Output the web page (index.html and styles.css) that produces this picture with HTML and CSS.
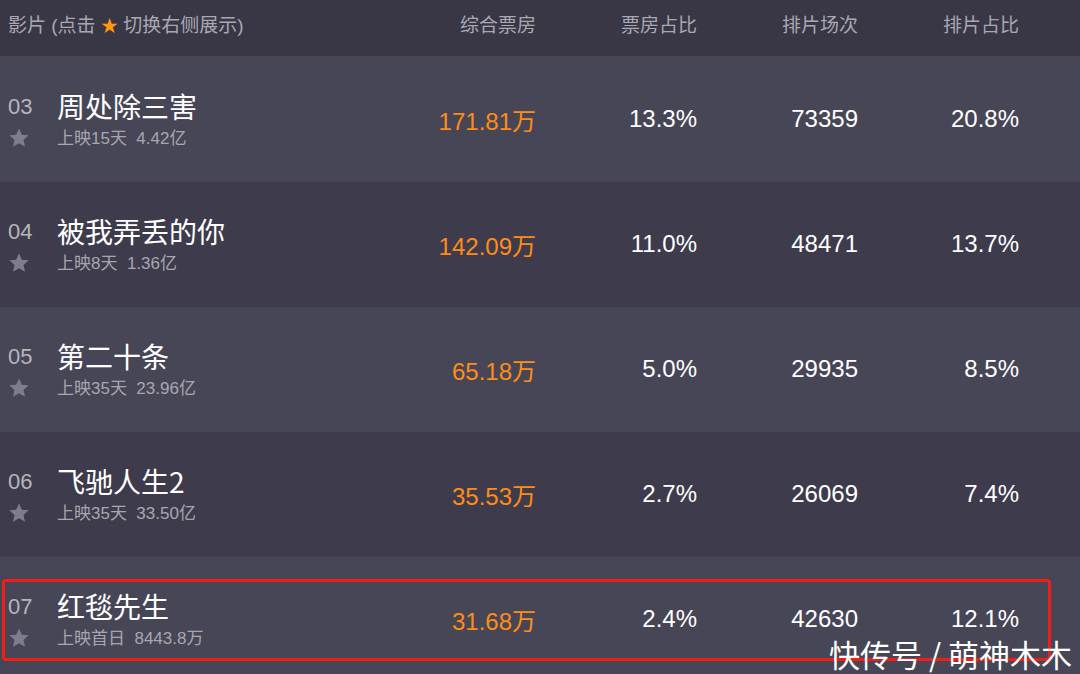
FILE: index.html
```html
<!DOCTYPE html>
<html lang="zh-CN">
<head>
<meta charset="utf-8">
<link rel="stylesheet" href="styles.css">
</head>
<body>
<div class="board">
  <div class="head">
    <div class="head-title">影片 (点击 <span class="hstar">★</span> 切换右侧展示)</div>
    <div class="head-col">综合票房</div>
    <div class="head-col">票房占比</div>
    <div class="head-col">排片场次</div>
    <div class="head-col">排片占比</div>
  </div>

  <div class="row light">
    <div class="film">
      <div class="idx"><div class="num">03</div><svg class="star" viewBox="0 0 24 24"><path d="M12 1.5l3.1 7 7.4.6-5.6 5 1.7 7.4L12 17.6l-6.6 3.9 1.7-7.4-5.6-5 7.4-.6z"/></svg></div>
      <div class="info"><div class="name">周处除三害</div><div class="sub">上映15天&nbsp;&nbsp;4.42亿</div></div>
    </div>
    <div class="val orange">171.81万</div>
    <div class="val">13.3%</div>
    <div class="val">73359</div>
    <div class="val">20.8%</div>
  </div>

  <div class="row dark">
    <div class="film">
      <div class="idx"><div class="num">04</div><svg class="star" viewBox="0 0 24 24"><path d="M12 1.5l3.1 7 7.4.6-5.6 5 1.7 7.4L12 17.6l-6.6 3.9 1.7-7.4-5.6-5 7.4-.6z"/></svg></div>
      <div class="info"><div class="name">被我弄丢的你</div><div class="sub">上映8天&nbsp;&nbsp;1.36亿</div></div>
    </div>
    <div class="val orange">142.09万</div>
    <div class="val">11.0%</div>
    <div class="val">48471</div>
    <div class="val">13.7%</div>
  </div>

  <div class="row light">
    <div class="film">
      <div class="idx"><div class="num">05</div><svg class="star" viewBox="0 0 24 24"><path d="M12 1.5l3.1 7 7.4.6-5.6 5 1.7 7.4L12 17.6l-6.6 3.9 1.7-7.4-5.6-5 7.4-.6z"/></svg></div>
      <div class="info"><div class="name">第二十条</div><div class="sub">上映35天&nbsp;&nbsp;23.96亿</div></div>
    </div>
    <div class="val orange">65.18万</div>
    <div class="val">5.0%</div>
    <div class="val">29935</div>
    <div class="val">8.5%</div>
  </div>

  <div class="row dark">
    <div class="film">
      <div class="idx"><div class="num">06</div><svg class="star" viewBox="0 0 24 24"><path d="M12 1.5l3.1 7 7.4.6-5.6 5 1.7 7.4L12 17.6l-6.6 3.9 1.7-7.4-5.6-5 7.4-.6z"/></svg></div>
      <div class="info"><div class="name">飞驰人生2</div><div class="sub">上映35天&nbsp;&nbsp;33.50亿</div></div>
    </div>
    <div class="val orange">35.53万</div>
    <div class="val">2.7%</div>
    <div class="val">26069</div>
    <div class="val">7.4%</div>
  </div>

  <div class="row light">
    <div class="film">
      <div class="idx"><div class="num">07</div><svg class="star" viewBox="0 0 24 24"><path d="M12 1.5l3.1 7 7.4.6-5.6 5 1.7 7.4L12 17.6l-6.6 3.9 1.7-7.4-5.6-5 7.4-.6z"/></svg></div>
      <div class="info"><div class="name">红毯先生</div><div class="sub">上映首日&nbsp;&nbsp;8443.8万</div></div>
    </div>
    <div class="val orange">31.68万</div>
    <div class="val">2.4%</div>
    <div class="val">42630</div>
    <div class="val">12.1%</div>
  </div>

  <div class="highlight"></div>
  <div class="watermark">快传号 / 萌神木木</div>
</div>
</body>
</html>
```

FILE: styles.css
```css
html, body {
  margin: 0;
  padding: 0;
  background: #474657;
}
body {
  width: 1080px;
  height: 674px;
  overflow: hidden;
  font-family: "Liberation Sans", "Noto Sans CJK SC", sans-serif;
}
.board {
  position: relative;
  width: 1080px;
  height: 674px;
  overflow: hidden;
}
.head {
  display: grid;
  grid-template-columns: 1fr 161px 161px 161px 161px;
  padding-right: 61px;
  height: 56px;
  align-items: center;
  background: #393745;
  color: #a9a8b2;
  font-size: 19px;
}
.head-title {
  padding-left: 8px;
  padding-bottom: 10px;
}
.hstar {
  color: #ff9a0e;
  font-size: 17px;
}
.head-col {
  text-align: right;
  font-size: 19px;
  padding-bottom: 10px;
}
.row {
  display: grid;
  grid-template-columns: 1fr 161px 161px 161px 161px;
  padding-right: 61px;
  height: 125px;
  align-items: center;
}
.row.light { background: #474657; }
.row.dark { background: #3e3c4c; }
.head + .row { margin-top: 1px; }
.film {
  display: flex;
  align-self: start;
  padding-top: 34px;
}
.idx {
  width: 57px;
  padding-left: 8px;
  box-sizing: border-box;
  display: flex;
  flex-direction: column;
}
.num {
  font-size: 22px;
  line-height: 28px;
  margin-top: 2px;
  color: #b6b5bd;
}
.star {
  width: 22px;
  height: 22px;
  margin-top: 6px;
  fill: #7e7d8b;
}
.info {
  display: flex;
  flex-direction: column;
}
.name {
  font-size: 28px;
  line-height: 30px;
  color: #ffffff;
  font-family: "Noto Sans CJK SC", sans-serif;
}
.sub {
  margin-top: 6px;
  font-size: 17px;
  line-height: 24px;
  color: #a7a6b0;
}
.val {
  text-align: right;
  font-size: 24px;
  color: #ffffff;
  padding-bottom: 1px;
}
.val.orange { color: #ff8c17; }
.highlight {
  position: absolute;
  left: 2px;
  top: 579px;
  width: 1043px;
  height: 76px;
  border: 3px solid #f21d16;
  border-radius: 4px;
}
.watermark {
  position: absolute;
  right: 8px;
  top: 638px;
  font-family: "Noto Sans CJK SC", sans-serif;
  font-size: 31px;
  line-height: 32px;
  color: #ffffff;
  white-space: nowrap;
}
```
